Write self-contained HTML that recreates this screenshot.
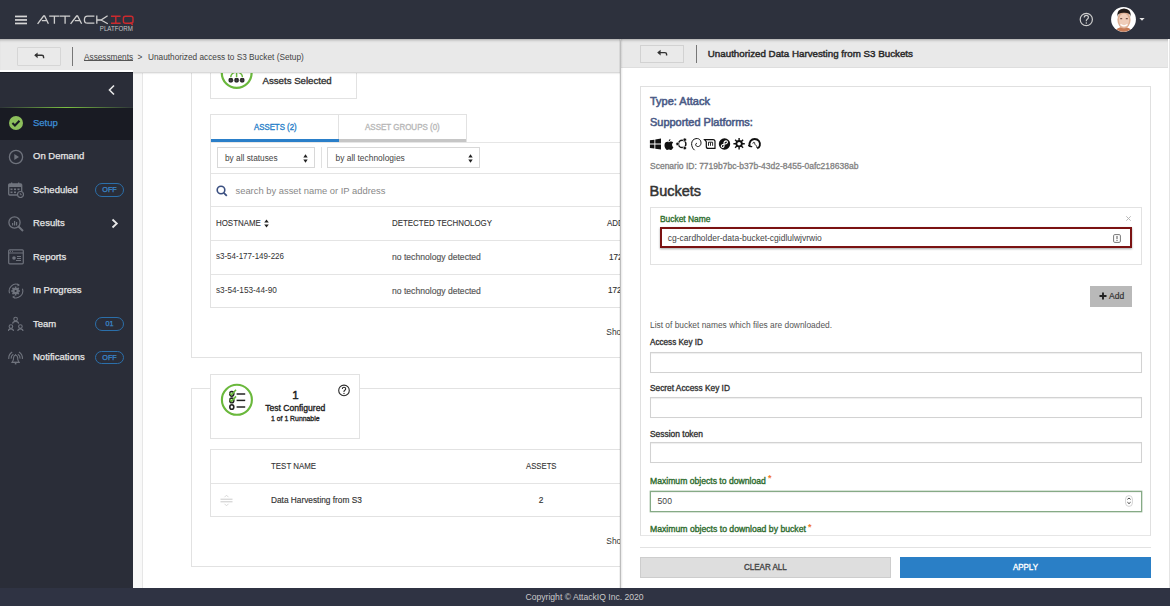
<!DOCTYPE html>
<html><head><meta charset="utf-8">
<style>
*{box-sizing:border-box;margin:0;padding:0}
html,body{width:1170px;height:606px;overflow:hidden;background:#fff;font-family:"Liberation Sans",sans-serif;color:#333}
.a{position:absolute}
.t{position:absolute;white-space:nowrap;line-height:1}
#hdr{left:0;top:0;width:1170px;height:39px;background:#2d313d;z-index:5}
#bc{left:0;top:39px;width:620px;height:33.5px;background:#e9e9e9;border-bottom:1px solid #d9d9d9;box-shadow:0 1px 1px rgba(0,0,0,.06), inset 0 3px 3px -2px rgba(0,0,0,.3);z-index:4}
#side{left:0;top:72px;width:133px;height:517px;background:#2a2d38;z-index:4;border-top:1px solid #1b1e27}
#strip{left:133px;top:71px;width:10px;height:517px;background:#f8f8f8;border-right:1px solid #e6e6e6}
#foot{left:0;top:587.6px;width:1170px;height:19px;background:#2f3343;z-index:8}
#panel{left:620px;top:39px;width:550px;height:549px;background:#fff;z-index:5;border-right:1.5px solid #e4e4e4}
.card{position:absolute;border:1px solid #e2e2e2;background:#fff}
.side-item{position:absolute;left:0;width:133px;height:33px}
.side-item .lbl{position:absolute;left:33px;top:11.2px;line-height:1;font-size:9.5px;color:#e6e6e6;white-space:nowrap;-webkit-text-stroke:.25px currentColor}
.badge{position:absolute;left:95px;top:50%;margin-top:-6.8px;width:29px;height:13.3px;border:1.4px solid #2b6faa;border-radius:7px;color:#3a88cc;font-size:7.2px;-webkit-text-stroke:.25px currentColor;text-align:center;line-height:11.6px}
.ico{position:absolute;left:8px;top:50%;margin-top:-8px;width:16px;height:16px}
.th{font-size:8.6px;color:#333;letter-spacing:0;-webkit-text-stroke:.1px currentColor;transform-origin:0 0;transform:scaleX(.92)}
.td{font-size:8px;color:#333;-webkit-text-stroke:.15px currentColor}
.lab{font-size:8.3px;color:#333;-webkit-text-stroke:.35px currentColor}
.glab{font-size:8.64px;color:#2d6b2d;-webkit-text-stroke:.35px currentColor}
.inp{position:absolute;left:649.5px;width:492px;height:21px;border:1px solid #d2d2d2;box-shadow:inset 0 1px 1px rgba(0,0,0,.07), 0 0 .5px rgba(0,0,0,.2);background:#fff}
</style></head><body>

<!-- HEADER -->
<div id="hdr" class="a">
  <svg class="a" style="left:0;top:0" width="140" height="39" viewBox="0 0 140 39">
    <g fill="#d6d6d6"><rect x="15" y="15.6" width="12" height="1.7"/><rect x="15" y="19.1" width="12" height="1.7"/><rect x="15" y="22.6" width="12" height="1.7"/></g>
    <g stroke="#cfcfcf" stroke-width="1.3" fill="none" stroke-linejoin="miter">
      <path d="M37.6 23.8 L43.6 16 H44.6 L48.4 23.8 M41.8 20.6 H46.8"/>
      <path d="M49.2 16.2 H59.6 M54.4 16.2 V23.8"/>
      <path d="M60 16.2 H70.2 M65.1 16.2 V23.8"/>
      <path d="M70.6 23.8 L76.6 16 H77.6 L81.6 23.8 M74.8 20.6 H80"/>
      <path d="M94.4 16.2 H87.5 Q84.4 16.2 84.4 20 Q84.4 23.2 87.5 23.2 H94.4"/>
      <path d="M96.8 15.5 V23.8 M97 20 H101 L107.6 15.8 M101 20 L107.8 23.8"/>
    </g>
    <g stroke="#cc2a2e" stroke-width="1.4" fill="none">
      <path d="M111 16.2 H120.6 M115.8 16.2 V23.2 M111 23.2 H120.6"/>
      <path d="M125.5 16.2 H131 Q133 16.2 133 18.2 V21.2 Q133 23.2 131 23.2 H125.5 Q123.4 23.2 123.4 21.2 V18.2 Q123.4 16.2 125.5 16.2 Z M130.6 22.2 L132.6 25.2"/>
    </g>
    <text x="99.8" y="30.6" font-family="Liberation Sans" font-size="6.6" fill="#c4c4c4" textLength="33" lengthAdjust="spacingAndGlyphs">PLATFORM</text>
  </svg>
  <svg class="a" style="left:1070px;top:0" width="100" height="39" viewBox="1070 0 100 39">
    <circle cx="1086.3" cy="19.5" r="6.1" fill="none" stroke="#cdcdcd" stroke-width="1.2"/>
    <path d="M1084.2 17.6 Q1084.2 15.3 1086.3 15.3 Q1088.4 15.3 1088.4 17.3 Q1088.4 18.6 1087.2 19.2 Q1086.3 19.7 1086.3 20.9 V21.3" fill="none" stroke="#cdcdcd" stroke-width="1.2"/>
    <circle cx="1086.3" cy="23.1" r=".75" fill="#cdcdcd"/>
    <defs><clipPath id="av"><circle cx="1123.5" cy="19.4" r="12.3"/></clipPath></defs>
    <circle cx="1123.5" cy="19.4" r="12.4" fill="#fff"/>
    <g clip-path="url(#av)">
      <path d="M1113 34 Q1116 27 1123.5 27 Q1131 27 1134 34 Z" fill="#c77b55"/>
      <ellipse cx="1124" cy="19.8" rx="6.6" ry="8.8" fill="#dcae92"/>
      <ellipse cx="1124" cy="20.5" rx="5" ry="7" fill="#efcdb9"/>
      <path d="M1117.2 17 Q1116.5 9 1124 8.6 Q1131.5 9 1130.8 17 Q1130 12.5 1124 12.8 Q1118 12.5 1117.2 17 Z" fill="#231c1a"/>
      <path d="M1120.5 24.6 Q1124 27 1127.5 24.6" fill="none" stroke="#fff" stroke-width="1.2"/>
      <g fill="#5a3a30"><rect x="1120.2" y="18.2" width="2" height="1"/><rect x="1125.8" y="18.2" width="2" height="1"/></g>
    </g>
    <path d="M1139.4 18 H1144.6 L1142 20.8 Z" fill="#e6e6e6"/>
  </svg>
</div>

<!-- BREADCRUMB -->
<div id="bc" class="a">
  <div class="a" style="left:17px;top:8px;width:44px;height:19px;border:1px solid #d6d6d6;border-radius:1px;background:#eaeaea"></div>
  <svg class="a" style="left:30px;top:11px" width="18" height="12" viewBox="30 50 18 12"><path d="M35 55.3 H41.8 Q43.6 55.3 43.6 57 V58.3" fill="none" stroke="#333" stroke-width="1.4"/><path d="M34.2 55.3 L37.6 52.4 V58.2 Z" fill="#333"/></svg>
  <div class="a" style="left:72px;top:8px;width:1px;height:19px;background:#777"></div>
  <div class="t" style="left:84px;top:15px;font-size:8.25px;color:#444">Assessments</div>
  <div class="a" style="left:84px;top:21.3px;width:49px;height:.8px;background:#555"></div>
  <div class="t" style="left:137.5px;top:15px;font-size:8.25px;color:#444">&gt;</div>
  <div class="t" style="left:148px;top:15px;font-size:8.28px;color:#444">Unauthorized access to S3 Bucket (Setup)</div>
</div>

<!-- SIDEBAR -->
<div class="a" style="left:0;top:70px;width:133px;height:2px;background:#fff;z-index:5"></div>
<div id="side" class="a"><div class="a" style="left:0;top:-1px;width:133px;height:400px">
  <svg class="a" style="left:106px;top:12px" width="12" height="12" viewBox="0 0 12 12"><path d="M8 1.5 L3.5 6 L8 10.5" fill="none" stroke="#e8e8e8" stroke-width="1.6"/></svg>
  <div class="a" style="left:0;top:34.5px;width:133px;height:1.2px;background:linear-gradient(90deg,rgba(120,190,60,.05),#7cc142 50%,rgba(120,190,60,.05))"></div>
  <div class="a" style="left:0;top:35.5px;width:133px;height:32px;background:#191b23"></div>
  <div class="side-item" style="top:34.5px">
    <svg class="ico" width="16" height="16" viewBox="0 0 16 16"><circle cx="8" cy="8" r="7" fill="#8dbf5c"/><path d="M4.4 8 L6.9 10.4 L11.5 5.7" fill="none" stroke="#1a1c24" stroke-width="2.1"/></svg>
    <div class="lbl" style="color:#3d8fd6">Setup</div>
  </div>
  <div class="side-item" style="top:68px">
    <svg class="ico" width="16" height="16" viewBox="0 0 16 16"><circle cx="8" cy="8" r="6.6" fill="none" stroke="#6f737d" stroke-width="1.3"/><path d="M6.3 5 L11 8 L6.3 11 Z" fill="#6f737d"/></svg>
    <div class="lbl">On Demand</div>
  </div>
  <div class="side-item" style="top:101.5px">
    <svg class="ico" width="16" height="16" viewBox="0 0 16 16"><rect x="0.7" y="2" width="13" height="11" rx="1" fill="none" stroke="#6f737d" stroke-width="1.3"/><rect x="0.7" y="2" width="13" height="3" fill="#6f737d"/><rect x="3" y="0.5" width="1.3" height="3" fill="#6f737d"/><rect x="10" y="0.5" width="1.3" height="3" fill="#6f737d"/><g fill="#6f737d"><rect x="2.5" y="6.5" width="2" height="1.6"/><rect x="6" y="6.5" width="2" height="1.6"/><rect x="9.5" y="6.5" width="2" height="1.6"/><rect x="2.5" y="9.5" width="2" height="1.6"/><rect x="6" y="9.5" width="2" height="1.6"/></g><circle cx="12.5" cy="12.5" r="3" fill="#2a2d38" stroke="#6f737d" stroke-width="1.2"/><path d="M12.3 11 V12.7 H13.8" fill="none" stroke="#6f737d" stroke-width=".9"/></svg>
    <div class="lbl">Scheduled</div>
    <div class="badge">OFF</div>
  </div>
  <div class="side-item" style="top:135px">
    <svg class="ico" width="16" height="16" viewBox="0 0 16 16"><circle cx="6.5" cy="6.5" r="5.6" fill="none" stroke="#6f737d" stroke-width="1.3"/><path d="M10.5 10.5 L15 15" stroke="#6f737d" stroke-width="2"/><g fill="#6f737d"><rect x="4" y="7" width="1.2" height="2.5"/><rect x="6" y="5" width="1.2" height="4.5"/><rect x="8" y="6" width="1.2" height="3.5"/></g></svg>
    <div class="lbl">Results</div>
    <svg class="a" style="left:111px;top:11px" width="8" height="11" viewBox="0 0 8 11"><path d="M1.5 1.5 L5.8 5.5 L1.5 9.5" fill="none" stroke="#e8e8e8" stroke-width="1.8"/></svg>
  </div>
  <div class="side-item" style="top:168.5px">
    <svg class="ico" width="16" height="16" viewBox="0 0 16 16"><rect x="0.7" y="0.8" width="14.6" height="14" rx="1" fill="none" stroke="#6f737d" stroke-width="1.2"/><path d="M0.7 4 H15.3" stroke="#6f737d" stroke-width="1"/><g fill="#6f737d"><rect x="2" y="1.8" width="1" height="1"/><rect x="4" y="1.8" width="1" height="1"/><circle cx="6" cy="9" r="1.8"/><rect x="9" y="7" width="4" height="1"/><rect x="9" y="9" width="4" height="1"/><rect x="8" y="11" width="5" height="1"/></g></svg>
    <div class="lbl">Reports</div>
  </div>
  <div class="side-item" style="top:202px">
    <svg class="ico" width="16" height="16" viewBox="0 0 16 16"><g fill="none" stroke="#6f737d" stroke-width="1.1"><path d="M10.5 1.6 A6.8 6.8 0 0 0 1.6 10.2"/><path d="M5.5 14.4 A6.8 6.8 0 0 0 14.4 5.8"/></g><path d="M9.3 0.4 L12 1.9 L9.6 3.4 Z M6.7 15.6 L4 14.1 L6.4 12.6 Z" fill="#6f737d"/><g stroke="#6f737d" stroke-width="1.6"><path d="M7.6 3.6 V12.4 M3.2 8 H12 M4.5 4.9 L10.7 11.1 M10.7 4.9 L4.5 11.1"/></g><circle cx="7.6" cy="8" r="3.3" fill="#6f737d"/><circle cx="7.6" cy="8" r="1.1" fill="#2a2d38"/></svg>
    <div class="lbl">In Progress</div>
  </div>
  <div class="side-item" style="top:235.5px">
    <svg class="ico" width="16" height="16" viewBox="0 0 16 16"><g fill="none" stroke="#6f737d" stroke-width="1.1"><circle cx="7.6" cy="3" r="1.8"/><path d="M4.6 7.6 Q4.8 5.4 7.6 5.4 Q10.4 5.4 10.6 7.6"/><circle cx="2.9" cy="10.6" r="1.8"/><path d="M0.3 15 Q0.4 12.9 2.9 12.9 Q5.4 12.9 5.5 15"/><circle cx="12.4" cy="10.6" r="1.8"/><path d="M9.8 15 Q9.9 12.9 12.4 12.9 Q14.9 12.9 15 15"/></g></svg>
    <div class="lbl">Team</div>
    <div class="badge">01</div>
  </div>
  <div class="side-item" style="top:269px">
    <svg class="ico" width="16" height="16" viewBox="0 0 16 16"><g fill="none" stroke="#6f737d" stroke-width="1.1"><path d="M4.2 2 A7.5 7.5 0 0 0 0.8 9"/><path d="M11 2 A7.5 7.5 0 0 1 14.4 9"/><path d="M5.3 4.3 A4.6 4.6 0 0 0 3.2 8.6"/><path d="M9.9 4.3 A4.6 4.6 0 0 1 12 8.6"/></g><path d="M7.6 5.2 C5.6 5.2 5.4 7.5 5.4 9.6 L4.2 12.4 H11 L9.8 9.6 C9.8 7.5 9.6 5.2 7.6 5.2 Z" fill="none" stroke="#6f737d" stroke-width="1.1"/><path d="M3.5 12.4 H11.7" stroke="#6f737d" stroke-width="1.2"/><rect x="6.8" y="13" width="1.6" height="1.4" fill="#6f737d"/><rect x="7.1" y="4" width="1" height="1.2" fill="#6f737d"/></svg>
    <div class="lbl">Notifications</div>
    <div class="badge">OFF</div>
  </div>
</div></div>
<div id="strip" class="a"></div>

<!-- CONTENT -->
<div id="content">
  <!-- card 1 outer -->
  <div class="card" style="left:191px;top:20px;width:450px;height:338px"></div>
  <!-- assets selected -->
  <div class="card" style="left:210px;top:40px;width:147px;height:59px"></div>
  <svg class="a" style="left:219px;top:55px" width="36" height="36" viewBox="0 0 36 36">
    <circle cx="17.7" cy="18" r="14.9" fill="none" stroke="#6ab83c" stroke-width="2.2"/>
    <g fill="#222"><rect x="9.6" y="23.1" width="4.4" height="4.4" rx="1.4"/><rect x="15.4" y="23.1" width="4.4" height="4.4" rx="1.4"/><rect x="21" y="23.1" width="4.4" height="4.4" rx="1.4"/></g>
    <g stroke="#555" stroke-width=".5"><path d="M9.6 25.3 H25.4"/><path d="M11.8 23.1 V27.5 M17.6 23.1 V27.5 M23.2 23.1 V27.5"/></g>
    <g fill="none" stroke="#6ab83c" stroke-width="1.5"><path d="M17.6 15 V22.3"/><path d="M11.8 22.3 Q11.8 18.6 15.4 17.6"/><path d="M23.4 22.3 Q23.4 18.6 19.8 17.6"/></g>
  </svg>
  <div class="t" style="left:262.5px;top:76.1px;font-size:9.66px;color:#333;-webkit-text-stroke:.35px currentColor;">Assets Selected</div>

  <!-- tabs -->
  <div class="a" style="left:210px;top:114px;width:129px;height:28px;border:1px solid #e2e2e2;border-bottom:none;background:#fff"></div>
  <div class="a" style="left:338px;top:114px;width:129px;height:28px;border:1px solid #e2e2e2;border-bottom:none;background:#fff"></div>
  <div class="a" style="left:211px;top:139px;width:127.5px;height:3px;background:#2a7fc9"></div>
  <div class="a" style="left:338.5px;top:139px;width:127.5px;height:3px;background:#c6c6c6"></div>
  <div class="t" style="left:253.5px;top:122.5px;font-size:8.4px;color:#2a7fc9;-webkit-text-stroke:.35px currentColor;transform:scaleX(.934);transform-origin:0 0">ASSETS (2)</div>
  <div class="t" style="left:365px;top:122.5px;font-size:8.4px;color:#b8b8b8;-webkit-text-stroke:.35px currentColor;transform:scaleX(.952);transform-origin:0 0">ASSET GROUPS (0)</div>
  <!-- table block -->
  <div class="a" style="left:210px;top:141.5px;width:430px;height:166.5px;border:1px solid #e2e2e2;border-top:1px solid #e6e6e6"></div>
  <div class="a" style="left:217px;top:147px;width:98px;height:21px;border:1px solid #d8d8d8;background:#fff"></div>
  <div class="t" style="left:225px;top:153.5px;font-size:8.3px;color:#444">by all statuses</div>
  <svg class="a" style="left:302.5px;top:152.5px" width="5" height="11" viewBox="0 0 5 11"><path d="M0.3 4.5 L2.5 1.2 L4.7 4.5Z M0.3 6.5 L2.5 9.8 L4.7 6.5Z" fill="#222"/></svg>
  <div class="a" style="left:321px;top:147px;width:1px;height:21px;background:#e0e0e0"></div>
  <div class="a" style="left:327px;top:147px;width:153px;height:21px;border:1px solid #d8d8d8;background:#fff"></div>
  <div class="t" style="left:335.5px;top:153.5px;font-size:8.43px;color:#444">by all technologies</div>
  <svg class="a" style="left:467.8px;top:152.5px" width="5" height="11" viewBox="0 0 5 11"><path d="M0.3 4.5 L2.5 1.2 L4.7 4.5Z M0.3 6.5 L2.5 9.8 L4.7 6.5Z" fill="#222"/></svg>
  <div class="a" style="left:211px;top:173px;width:430px;height:1px;background:#e4e4e4"></div>
  <svg class="a" style="left:216px;top:185px" width="12" height="12" viewBox="0 0 12 12"><circle cx="5" cy="5" r="3.8" fill="none" stroke="#3a4f80" stroke-width="1.6"/><path d="M7.8 7.8 L10.8 10.8" stroke="#3a4f80" stroke-width="1.8"/></svg>
  <div class="t" style="left:235.5px;top:185.5px;font-size:9.4px;color:#888">search by asset name or IP address</div>
  <div class="a" style="left:211px;top:206px;width:430px;height:1px;background:#e4e4e4"></div>
  <div class="t th" style="left:216.3px;top:219.1px">HOSTNAME</div>
  <svg class="a" style="left:263.5px;top:218.5px" width="5" height="9" viewBox="0 0 5 9"><path d="M0.2 3.6 L2.5 0.6 L4.8 3.6Z M0.2 5.4 L2.5 8.4 L4.8 5.4Z" fill="#222"/></svg>
  <div class="t th" style="left:392px;top:219.1px">DETECTED TECHNOLOGY</div>
  <div class="t th" style="left:606.5px;top:219.1px">ADDRESS</div>
  <div class="a" style="left:211px;top:240px;width:430px;height:1px;background:#e4e4e4"></div>
  <div class="t td" style="left:216.2px;top:252.3px;font-size:9px;-webkit-text-stroke:0;transform:scaleX(.888);transform-origin:0 0">s3-54-177-149-226</div>
  <div class="t td" style="left:392px;top:253px;font-size:8.6px;color:#555">no technology detected</div>
  <div class="t td" style="left:608.8px;top:252.5px;font-size:9px;transform:scaleX(.9);transform-origin:0 0">172.31.0.1</div>
  <div class="a" style="left:211px;top:273.5px;width:430px;height:1px;background:#e4e4e4"></div>
  <div class="t td" style="left:216.2px;top:285.8px;font-size:9px;-webkit-text-stroke:0;transform:scaleX(.915);transform-origin:0 0">s3-54-153-44-90</div>
  <div class="t td" style="left:392px;top:286.5px;font-size:8.6px;color:#555">no technology detected</div>
  <div class="t td" style="left:607.5px;top:286px;font-size:9px;transform:scaleX(.9);transform-origin:0 0">172.31.0.2</div>
  <div class="t" style="left:606.3px;top:328px;font-size:8.4px;color:#333">Showing</div>

  <!-- card 2 outer -->
  <div class="card" style="left:191px;top:388px;width:450px;height:178.5px"></div>
  <div class="card" style="left:210px;top:373.5px;width:150px;height:65.5px"></div>
  <svg class="a" style="left:219px;top:382px" width="36" height="36" viewBox="0 0 36 36">
    <circle cx="17.9" cy="17.8" r="15" fill="none" stroke="#6ab83c" stroke-width="2.1"/>
    <g fill="none" stroke="#222" stroke-width="1.6"><ellipse cx="12.8" cy="11.8" rx="2" ry="2.3"/><ellipse cx="12.8" cy="18.4" rx="2" ry="2.3"/><ellipse cx="12.8" cy="25" rx="2" ry="2.3"/></g>
    <g stroke="#222" stroke-width="1.5"><path d="M17.6 12 H26.2"/><path d="M17.6 18.4 H26.2"/><path d="M17.6 25 H26.2"/></g>
    <g fill="none" stroke="#6ab83c" stroke-width="1.6"><path d="M10.6 10.8 L12.6 12.8 L17 7.8"/><path d="M10.6 17.4 L12.6 19.4 L17 14.4"/></g>
  </svg>
  <div class="t" style="left:292.2px;top:389.8px;font-size:11.5px;color:#222;-webkit-text-stroke:.45px currentColor">1</div>
  <div class="t" style="left:265.2px;top:403.7px;font-size:8.57px;color:#222;-webkit-text-stroke:.35px currentColor;">Test Configured</div>
  <div class="t" style="left:271px;top:415.5px;font-size:6.88px;color:#222;-webkit-text-stroke:.3px currentColor">1 of 1 Runnable</div>
  <svg class="a" style="left:336px;top:382px" width="16" height="16" viewBox="336 382 16 16"><circle cx="344" cy="390.4" r="5.3" fill="none" stroke="#2a2a2a" stroke-width="1.1"/><path d="M342.3 389 Q342.3 387.3 344 387.3 Q345.7 387.3 345.7 388.8 Q345.7 389.8 344.8 390.2 Q344 390.6 344 391.6 V392" fill="none" stroke="#2a2a2a" stroke-width="1.1"/><circle cx="344" cy="393.5" r=".65" fill="#2a2a2a"/></svg>

  <div class="a" style="left:210px;top:448.5px;width:430px;height:68.5px;border:1px solid #e2e2e2"></div>
  <div class="a" style="left:211px;top:482.5px;width:430px;height:1px;background:#e4e4e4"></div>
  <div class="t th" style="left:271px;top:461.7px">TEST NAME</div>
  <div class="t th" style="left:526px;top:461.7px;transform:scaleX(.9)">ASSETS</div>
  <svg class="a" style="left:220px;top:493.5px" width="13" height="13" viewBox="0 0 13 13"><g stroke="#c4c4c4" stroke-width=".9"><path d="M.5 5.2 H12.5"/><path d="M.5 7.8 H12.5"/></g><path d="M4.5 3.2 L6.5 1.2 L8.5 3.2 M4.5 9.8 L6.5 11.8 L8.5 9.8" fill="none" stroke="#cfcfcf" stroke-width=".8"/></svg>
  <div class="t td" style="left:271px;top:495.5px;font-size:8.3px">Data Harvesting from S3</div>
  <div class="t td" style="left:538.7px;top:495.5px;font-size:8.3px">2</div>
  <div class="t" style="left:606.3px;top:536.5px;font-size:8.4px;color:#333">Showing</div>
</div>

<!-- PANEL -->
<div id="panel" class="a"></div>
<div class="a" style="left:0;top:0;z-index:7">
  <div class="a" style="left:621px;top:39px;width:547px;height:28.5px;background:#e9e9e9;border-bottom:1px solid #dedede;box-shadow:inset 0 3px 3px -2px rgba(0,0,0,.3)"></div>
  <div class="a" style="left:619px;top:39px;width:1px;height:549px;background:rgba(0,0,0,.06)"></div>
  <div class="a" style="left:620px;top:39px;width:1px;height:549px;background:#bdbdbd"></div>
  <div class="a" style="left:621px;top:39px;width:2px;height:549px;background:linear-gradient(90deg,rgba(0,0,0,.09),rgba(0,0,0,0))"></div>
  <div class="a" style="left:640px;top:44.5px;width:43.5px;height:18px;border:1px solid #d2d2d2;background:#eaeaea"></div>
  <svg class="a" style="left:652.8px;top:45.6px" width="18" height="16" viewBox="30 46 18 16"><path d="M35 52.6 H41.8 Q43.6 52.6 43.6 54.3 V55.6" fill="none" stroke="#333" stroke-width="1.4"/><path d="M34.2 52.6 L37.6 49.7 V55.5 Z" fill="#333"/></svg>
  <div class="a" style="left:696px;top:45px;width:1px;height:17.5px;background:#777"></div>
  <div class="t" style="left:707.8px;top:49.2px;font-size:9.78px;color:#2b2b2b;-webkit-text-stroke:.45px currentColor;">Unauthorized Data Harvesting from S3 Buckets</div>

  <div class="a" style="left:640px;top:86px;width:511px;height:450px;border:1px solid #e0e0e0;border-bottom:1px solid #e6e6e6;overflow:hidden">
  </div>
  <div class="t" style="left:650px;top:96.1px;font-size:11px;color:#4a5a86;-webkit-text-stroke:.55px currentColor">Type: Attack</div>
  <div class="t" style="left:650px;top:116.8px;font-size:10.96px;color:#4a5a86;-webkit-text-stroke:.55px currentColor">Supported Platforms:</div>
  <svg class="a" style="left:646px;top:135px" width="120" height="18" viewBox="646 135 120 18">
  <g fill="#111">
    <path d="M649.9 140.3 L654.4 139.7 V143.6 H649.9 Z M655.3 139.5 L661 138.6 V143.6 H655.3 Z M649.9 144.6 H654.4 V148.5 L649.9 147.9 Z M655.3 144.6 H661 V149.6 L655.3 148.7 Z"/>
    <path d="M668.6 142.2 C667.4 141.5 664.6 141.6 664.5 145 C664.4 147.6 666.2 150 667.2 150 C668 150 668.2 149.6 669 149.6 C669.8 149.6 670.1 150 670.9 150 C671.8 150 673 148.2 673.4 147.3 C671.6 146.4 671.6 143.3 673.2 142.6 C672.4 141.4 670.8 141.3 669.6 142 Z"/>
    <path d="M668.6 141.4 C668.6 140.2 669.4 139.2 670.4 138.9 C670.5 140.1 669.7 141.1 668.6 141.4 Z"/>
  </g>
  <circle cx="682.2" cy="143.9" r="3.7" fill="none" stroke="#111" stroke-width="1.5"/>
  <g fill="#111" stroke="#fff" stroke-width=".6"><circle cx="677.5" cy="143.9" r="1.7"/><circle cx="684.8" cy="139.7" r="1.7"/><circle cx="684.8" cy="148.1" r="1.7"/></g>
  <path d="M694.6 150.2 C690.5 147 690.3 139.5 696 138.6 C700 138 701.6 141.5 700.8 144.3 C700 146.8 697 147.2 696 145.6 C695.2 144.4 696 143.2 697 143.3" fill="none" stroke="#111" stroke-width="1"/>
  <g fill="none" stroke="#111">
    <path d="M704.5 139.6 H713 Q715 139.6 715 141.6 V148.4 H708.3 Q706.3 148.4 706.3 146.4 V141.7 Z" stroke-width="1.2"/>
    <path d="M708.5 145.8 V142.2 H712.6 V145.8 M710.5 142.5 V145.8" stroke-width=".9"/>
  </g>
  <circle cx="724.5" cy="144" r="5.7" fill="#111"/>
  <path d="M723.8 144.2 C723.8 142.2 724.6 140.9 726.2 140.9 C727.6 140.9 728 142.8 726.6 143.6 C725.6 144.2 723.8 144.2 723.8 144.2 C723.8 144.2 721.8 144.4 721.4 145.6 C721 147 722.2 147.8 723.2 147.4 C724.2 146.9 724.2 145.4 724.2 144.2" fill="none" stroke="#fff" stroke-width="1.1"/>
  <g stroke="#111" stroke-width="1.4"><path d="M739.1 138 V149.4 M733.4 143.7 H744.8 M735.1 139.7 L743.1 147.7 M743.1 139.7 L735.1 147.7"/></g>
  <circle cx="739.1" cy="143.7" r="3.6" fill="#111"/><circle cx="739.1" cy="143.7" r="1.8" fill="#fff"/>
  <path d="M749.6 146.2 C748.6 141.6 751.6 139 754.6 139 C758.4 139 760.6 142.2 759.8 145.6 C759.4 147.4 758.4 148 757.2 148.2" fill="none" stroke="#111" stroke-width="1.9"/>
  <path d="M748.4 145 C749.6 146.6 751 147 752.2 146.4" fill="none" stroke="#111" stroke-width="1.3"/>
  <path d="M752.6 143.4 C753 142.2 754.4 142 754.8 142.8 C755.2 143.6 754.2 144 753.8 143.6 M754.6 144.2 C756 144.8 756.8 146 757 148" fill="none" stroke="#111" stroke-width=".9"/>
</svg>
  <div class="t" style="left:650px;top:161.6px;font-size:8.5px;color:#828282;-webkit-text-stroke:.3px currentColor">Scenario ID: 7719b7bc-b37b-43d2-8455-0afc218638ab</div>
  <div class="t" style="left:649.5px;top:184.4px;font-size:14.5px;color:#333;-webkit-text-stroke:.5px currentColor">Buckets</div>

  <div class="a" style="left:649.5px;top:206.5px;width:492px;height:58px;border:1px solid #e2e2e2"></div>
  <div class="t" style="left:660px;top:215.1px;font-size:8.41px;color:#2e6e2e;-webkit-text-stroke:.35px currentColor;">Bucket Name</div>
  <svg class="a" style="left:1125.5px;top:216px" width="5" height="5" viewBox="0 0 5 5"><path d="M0.3 0.3 L4.7 4.7 M4.7 0.3 L0.3 4.7" stroke="#b0b0b0" stroke-width=".9"/></svg>
  <div class="a" style="left:659.6px;top:227.3px;width:472px;height:20.5px;border:2px solid #7b1212;box-shadow:0 1px 2px rgba(0,0,0,.35);background:#fff"></div>
  <div class="t" style="left:667.8px;top:234px;font-size:8.5px;color:#444">cg-cardholder-data-bucket-cgidlulwjvrwio</div>
  <svg class="a" style="left:1113px;top:234px" width="8" height="9" viewBox="0 0 8 9"><rect x=".6" y=".6" width="6.8" height="7.8" rx="1.2" fill="none" stroke="#777" stroke-width="1"/><path d="M4 2 V5.2" stroke="#555" stroke-width="1"/><rect x="3.5" y="6" width="1" height="1" fill="#555"/></svg>

  <div class="a" style="left:1090px;top:286px;width:42px;height:20.5px;background:#b9b9b9"></div>
  <svg class="a" style="left:1098.5px;top:292px" width="9" height="9" viewBox="0 0 9 9"><path d="M4 .5 V7.5 M.5 4 H7.5" stroke="#222" stroke-width="1.9"/></svg>
  <div class="t" style="left:1109px;top:292px;font-size:8.5px;color:#333;-webkit-text-stroke:.2px currentColor">Add</div>

  <div class="t" style="left:650px;top:321px;font-size:8.4px;color:#555">List of bucket names which files are downloaded.</div>
  <div class="t lab" style="left:650px;top:339.3px;font-size:8.15px">Access Key ID</div>
  <div class="inp" style="top:352.3px;height:20.5px"></div>
  <div class="t lab" style="left:650px;top:384.1px;font-size:8.32px">Secret Access Key ID</div>
  <div class="inp" style="top:397.4px;height:20.5px"></div>
  <div class="t lab" style="left:650px;top:429.6px;font-size:8.44px">Session token</div>
  <div class="inp" style="top:442.4px;height:21px"></div>
  <div class="t glab" style="left:650px;top:477px;font-size:8.62px">Maximum objects to download</div>
  <div class="t" style="left:768px;top:474px;font-size:9px;font-weight:bold;color:#f07a2a">*</div>
  <div class="inp" style="top:490.7px;height:21px;border:1px solid #86aa86;box-shadow:0 0 0 .4px #9dbb9d, inset 0 1px 1px rgba(0,0,0,.06)"></div>
  <div class="t" style="left:657.6px;top:496.5px;font-size:8.6px;color:#444">500</div>
  <svg class="a" style="left:1124.8px;top:494.8px" width="8" height="12" viewBox="0 0 8 12"><rect x=".6" y=".6" width="6.8" height="10.8" rx="3.4" fill="none" stroke="#cfcfcf" stroke-width=".9"/><path d="M2.4 4.4 L4 3 L5.6 4.4 M2.4 7.2 L4 8.6 L5.6 7.2" fill="none" stroke="#444" stroke-width="1"/></svg>
  <div class="a" style="left:641px;top:520px;width:509px;height:15px;background:#fff;overflow:hidden">
    <div class="t glab" style="left:9px;top:4.9px;font-size:8.66px">Maximum objects to download by bucket</div>
    <div class="t" style="left:167px;top:2.5px;font-size:9px;font-weight:bold;color:#f07a2a">*</div>
  </div>

  <div class="a" style="left:640px;top:547px;width:511px;height:1px;background:#e2e2e2"></div>
  <div class="a" style="left:640px;top:557.2px;width:251px;height:20.5px;background:#dedede;border:1px solid #cdcdcd"></div>
  <div class="t" style="left:744px;top:563px;font-size:8.6px;color:#444;-webkit-text-stroke:.35px currentColor;transform:scaleX(.933);transform-origin:0 0">CLEAR ALL</div>
  <div class="a" style="left:900.3px;top:557.3px;width:250.7px;height:20.5px;background:#2a7fc6"></div>
  <div class="t" style="left:1013px;top:563px;font-size:8.6px;color:#fff;-webkit-text-stroke:.35px currentColor;transform:scaleX(.923);transform-origin:0 0">APPLY</div>
</div>


<!-- FOOTER -->
<div id="foot" class="a">
  <div class="t" style="left:525.5px;top:5.6px;font-size:8.6px;color:#cacaca">Copyright &copy; AttackIQ Inc. 2020</div>
</div>
</body></html>
